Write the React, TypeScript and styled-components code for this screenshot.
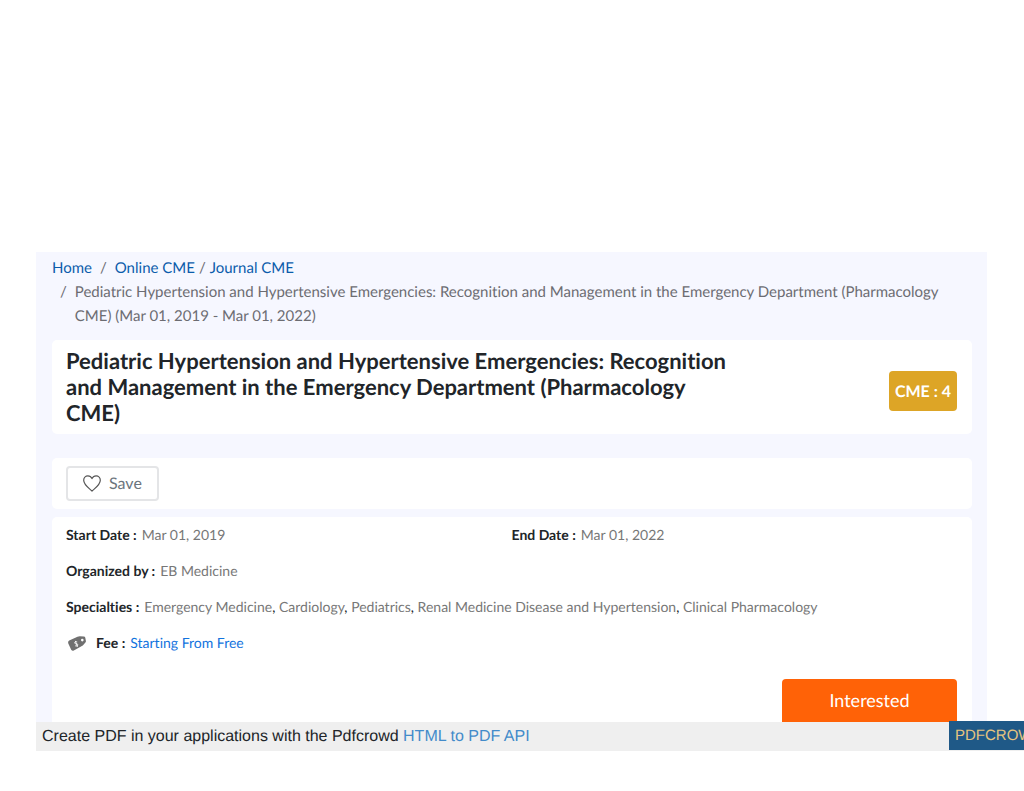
import React from "react";
import styled, { createGlobalStyle } from "styled-components";

const GlobalStyle = createGlobalStyle`
  *, *::before, *::after { box-sizing: border-box; }
  body {
    margin: 0;
    background: #ffffff;
    color: #212529;
    font-family: Lato, "Liberation Sans", sans-serif;
    font-size: 16px;
    line-height: 24px;
    text-rendering: geometricPrecision;
    font-variant-ligatures: none;
  }
  button { text-rendering: inherit; }
  a { text-decoration: none; }
`;

const Page = styled.div`
  padding: 252px 0 40px 36px;
  overflow: hidden;
`;

const Panel = styled.main`
  margin-right: 37px;
  padding: 4px 15px 0 16px;
  background: #f6f7ff;
`;

const Breadcrumb = styled.ol`
  list-style: none;
  margin: 0 0 12px;
  padding: 0;
  font-size: 15px;
`;

const Crumbs = styled.li`
  display: flex;
  color: #6c6c72;
`;

const CrumbLink = styled.a`
  color: #0b5cab;
`;

const Slash = styled.span<{ $gap: number }>`
  padding: 0 ${(p) => p.$gap}px;
`;

const CurrentCrumb = styled.span`
  flex: 1;
`;

const Card = styled.section<{ $gap?: number }>`
  margin-bottom: ${(p) => p.$gap ?? 0}px;
  padding: 8px 15px 8px 14px;
  background: #ffffff;
  border-radius: 5px;
`;

const TitleCard = styled(Card)`
  display: flex;
  align-items: center;
  justify-content: space-between;
`;

const Title = styled.h1`
  width: 75%;
  margin: 0;
  font-size: 22px;
  line-height: 26px;
  font-weight: 700;
`;

const CreditBadge = styled.span`
  margin-top: 8px;
  padding: 9px 6px 7px;
  border-radius: 4px;
  background: #dda526;
  color: #ffffff;
  font-weight: 700;
  white-space: nowrap;
`;

const SaveButton = styled.button`
  display: flex;
  align-items: center;
  gap: 8px;
  height: 35px;
  padding: 0 15px;
  border: 2px solid #e4e5e7;
  border-radius: 4px;
  background: #ffffff;
  color: #6c757d;
  font: inherit;
`;

const DetailsCard = styled(Card)`
  padding-top: 7px;
  padding-bottom: 0;
  border-radius: 5px 5px 0 0;
  font-size: 14px;
  line-height: 21px;
`;

const Details = styled.dl`
  display: grid;
  grid-template-columns: 1fr 1fr;
  row-gap: 15px;
  margin: 0 0 26px;
`;

const Detail = styled.div<{ $wide?: boolean }>`
  display: flex;
  align-items: center;
  gap: 5px;
  grid-column: ${(p) => (p.$wide ? "1 / -1" : "auto")};
`;

const Label = styled.dt`
  font-weight: 700;
`;

const Value = styled.dd`
  margin: 0;
  color: #777777;
`;

const Comma = styled.span`
  color: #212529;
`;

const FeeLink = styled.a`
  color: #1273de;
`;

const FeeIcon = styled.svg`
  margin: 2px 5px 0 2px;
`;

const InterestedButton = styled.button`
  display: block;
  width: 175px;
  height: 43px;
  margin-left: auto;
  border: 0;
  border-radius: 4px 4px 0 0;
  background: #ff6207;
  color: #ffffff;
  font: inherit;
  font-size: 18px;
`;

const Footer = styled.footer`
  display: flex;
  justify-content: space-between;
  background: #efefef;
  font-family: "Liberation Sans", Arial, sans-serif;
  line-height: 28px;
  white-space: nowrap;
`;

const FooterText = styled.span`
  padding: 1px 0 0 6px;
`;

const ApiLink = styled.a`
  color: #428bca;
`;

const Brand = styled.a`
  width: 75px;
  margin: -1px 0 1px;
  padding: 1px 0 0 6px;
  overflow: hidden;
  background: #1f5987;
  color: #e5c57f;
  font-size: 15px;
`;

const specialties = [
  "Emergency Medicine",
  "Cardiology",
  "Pediatrics",
  "Renal Medicine Disease and Hypertension",
  "Clinical Pharmacology",
];

export default function App() {
  return (
    <>
      <GlobalStyle />
      <Page>
        <Panel>
          <Breadcrumb>
            <Crumbs>
              <CrumbLink href="#home">Home</CrumbLink>
              <Slash $gap={8}>/</Slash>
              <CrumbLink href="#online">Online CME</CrumbLink>
              <Slash $gap={4}>/</Slash>
              <CrumbLink href="#journal">Journal CME</CrumbLink>
            </Crumbs>
            <Crumbs>
              <Slash $gap={8}>/</Slash>
              <CurrentCrumb>
                Pediatric Hypertension and Hypertensive Emergencies: Recognition and Management in the
                Emergency Department (Pharmacology CME) (Mar 01, 2019 - Mar 01, 2022)
              </CurrentCrumb>
            </Crumbs>
          </Breadcrumb>

          <TitleCard $gap={24}>
            <Title>
              Pediatric Hypertension and Hypertensive Emergencies: Recognition and Management in the
              Emergency Department (Pharmacology CME)
            </Title>
            <CreditBadge>CME : 4</CreditBadge>
          </TitleCard>

          <Card $gap={8}>
            <SaveButton type="button">
              <svg width="18" height="17" viewBox="0 0 18 17" fill="none" stroke="#555" strokeWidth="1.2" strokeLinejoin="round" aria-hidden="true">
                <path d="M9 16C6.200 13.400.7 10 .7 5.300.7 2.700 2.600.9 4.900.9 6.800.9 8.200 2 9 3.600 9.800 2 11.200.9 13.100.9c2.300 0 4.200 1.800 4.200 4.400C17.300 10 11.800 13.400 9 16Z" />
              </svg>
              Save
            </SaveButton>
          </Card>

          <DetailsCard>
            <Details>
              <Detail>
                <Label>Start Date :</Label>
                <Value>Mar 01, 2019</Value>
              </Detail>
              <Detail>
                <Label>End Date :</Label>
                <Value>Mar 01, 2022</Value>
              </Detail>
              <Detail $wide>
                <Label>Organized by :</Label>
                <Value>EB Medicine</Value>
              </Detail>
              <Detail $wide>
                <Label>Specialties :</Label>
                <Value>
                  {specialties.map((name, i) => (
                    <React.Fragment key={name}>
                      {i > 0 && <Comma>, </Comma>}
                      {name}
                    </React.Fragment>
                  ))}
                </Value>
              </Detail>
              <Detail $wide>
                <FeeIcon width="18" height="15" viewBox="0 0 18 15" aria-hidden="true">
                  <path d="M1.200 4.600 9.500.8Q10.600.3 11.800.3l4 .2q1.200.1 1.500 1.200l.6 3.200q.2 1.100-.7 1.900L14.800 9.400 5.800 14.500Q4.300 15.200 3.200 13.800L.3 7.400Q-.3 5.400 1.200 4.600Z" fill="#707070" />
                  <circle cx="14.300" cy="4.100" r="1.300" fill="#fff" />
                  <path d="M9.200 5.900C8.100 5.300 6.200 6.100 6.700 7.200c.5 1 2.600.2 3.100 1.300.5 1.200-1.400 1.900-2.600 1.300M7.300 4.900l2.200 6" fill="none" stroke="#fff" strokeWidth=".9" />
                </FeeIcon>
                <Label>Fee :</Label>
                <Value>
                  <FeeLink href="#fee">Starting From Free</FeeLink>
                </Value>
              </Detail>
            </Details>
            <InterestedButton type="button">Interested</InterestedButton>
          </DetailsCard>
        </Panel>
        <Footer>
          <FooterText>
            Create PDF in your applications with the Pdfcrowd <ApiLink href="#api">HTML to PDF API</ApiLink>
          </FooterText>
          <Brand href="#pdfcrowd">PDFCROWD</Brand>
        </Footer>
      </Page>
    </>
  );
}
